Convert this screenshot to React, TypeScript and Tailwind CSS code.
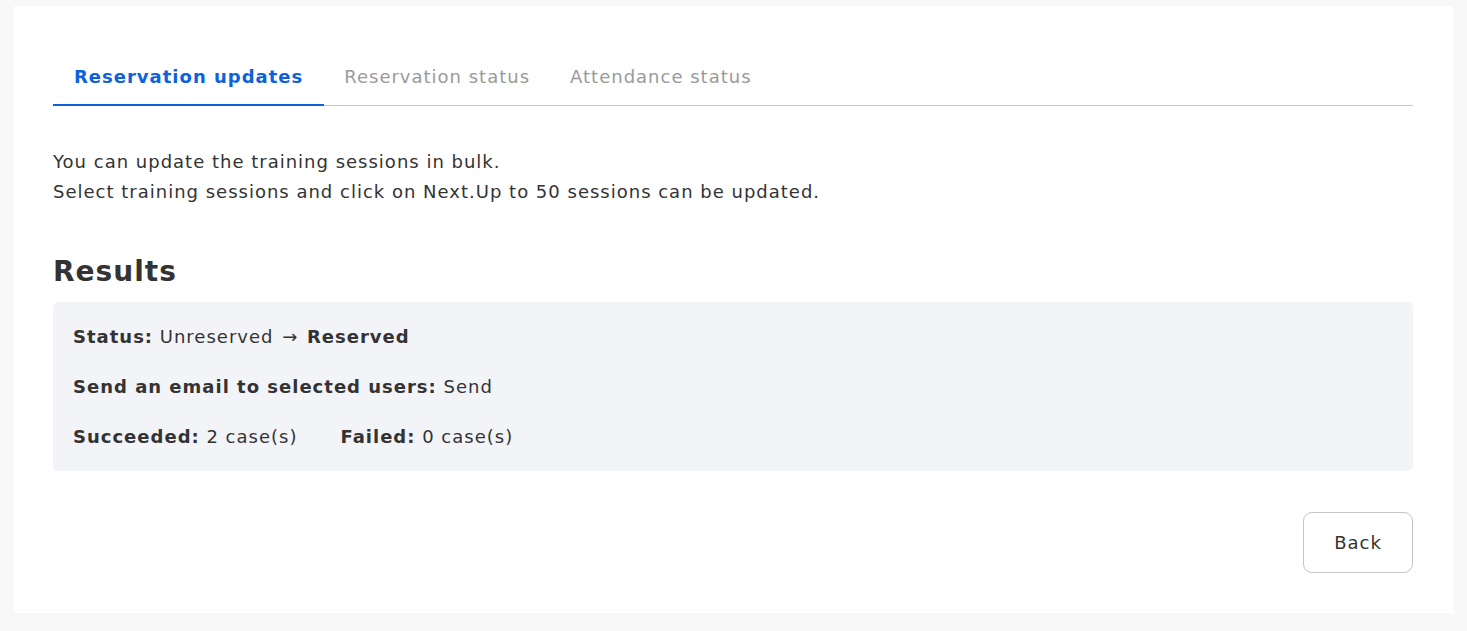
import React from 'react';

const tabs = ['Reservation updates', 'Reservation status', 'Attendance status'];

const App: React.FC = () => {
    return (
        <div className="min-h-[631px] bg-[#f8f8f8] px-[14px] pt-[6px] pb-[19px] font-['DejaVu_Sans',Verdana,sans-serif] tracking-[1px] text-[#333333]">
            <div className="bg-white pl-[39px] pr-[40px] pt-[56px] pb-[40px]">
                {/* Tabs */}
                <div className="flex border-b border-[#c8c8c8]">
                    {tabs.map((tab, i) => (
                        <div
                            key={tab}
                            className={`-mb-px pb-[12px] text-[18px] leading-[30px] ${i === 0 ? 'px-[21px] border-b-2 border-[#0b62dc] font-bold text-[#0b62dc]' : 'px-[20px] border-b-2 border-transparent text-[#9a9a9a]'}`}
                        >
                            {tab}
                        </div>
                    ))}
                </div>

                <div className="mt-[41px] text-[18px] leading-[30px]">
                    <p>You can update the training sessions in bulk.</p>
                    <p>Select training sessions and click on Next.Up to 50 sessions can be updated.</p>
                </div>

                <h2 className="mt-[45px] text-[28px] leading-[40px] font-bold">Results</h2>

                {/* Result summary */}
                <div className="mt-[10px] flex flex-col gap-[20px] rounded-[5px] bg-[#f3f4f8] px-[20px] pt-[20px] pb-[19px] text-[18px] leading-[30px]">
                    <p><span className="font-bold">Status:</span> Unreserved <span className="px-[2px]">→</span> <span className="font-bold">Reserved</span></p>
                    <p><span className="font-bold">Send an email to selected users:</span> Send</p>
                    <p className="flex gap-[43px]">
                        <span><span className="font-bold">Succeeded:</span> 2 case(s)</span>
                        <span><span className="font-bold">Failed:</span> 0 case(s)</span>
                    </p>
                </div>

                <div className="mt-[41px] flex justify-end">
                    <button className="h-[61px] w-[110px] rounded-[9px] border border-[#c4c4c4] bg-white text-[18px] text-[#333333]">
                        Back
                    </button>
                </div>
            </div>
        </div>
    );
};

export default App;
